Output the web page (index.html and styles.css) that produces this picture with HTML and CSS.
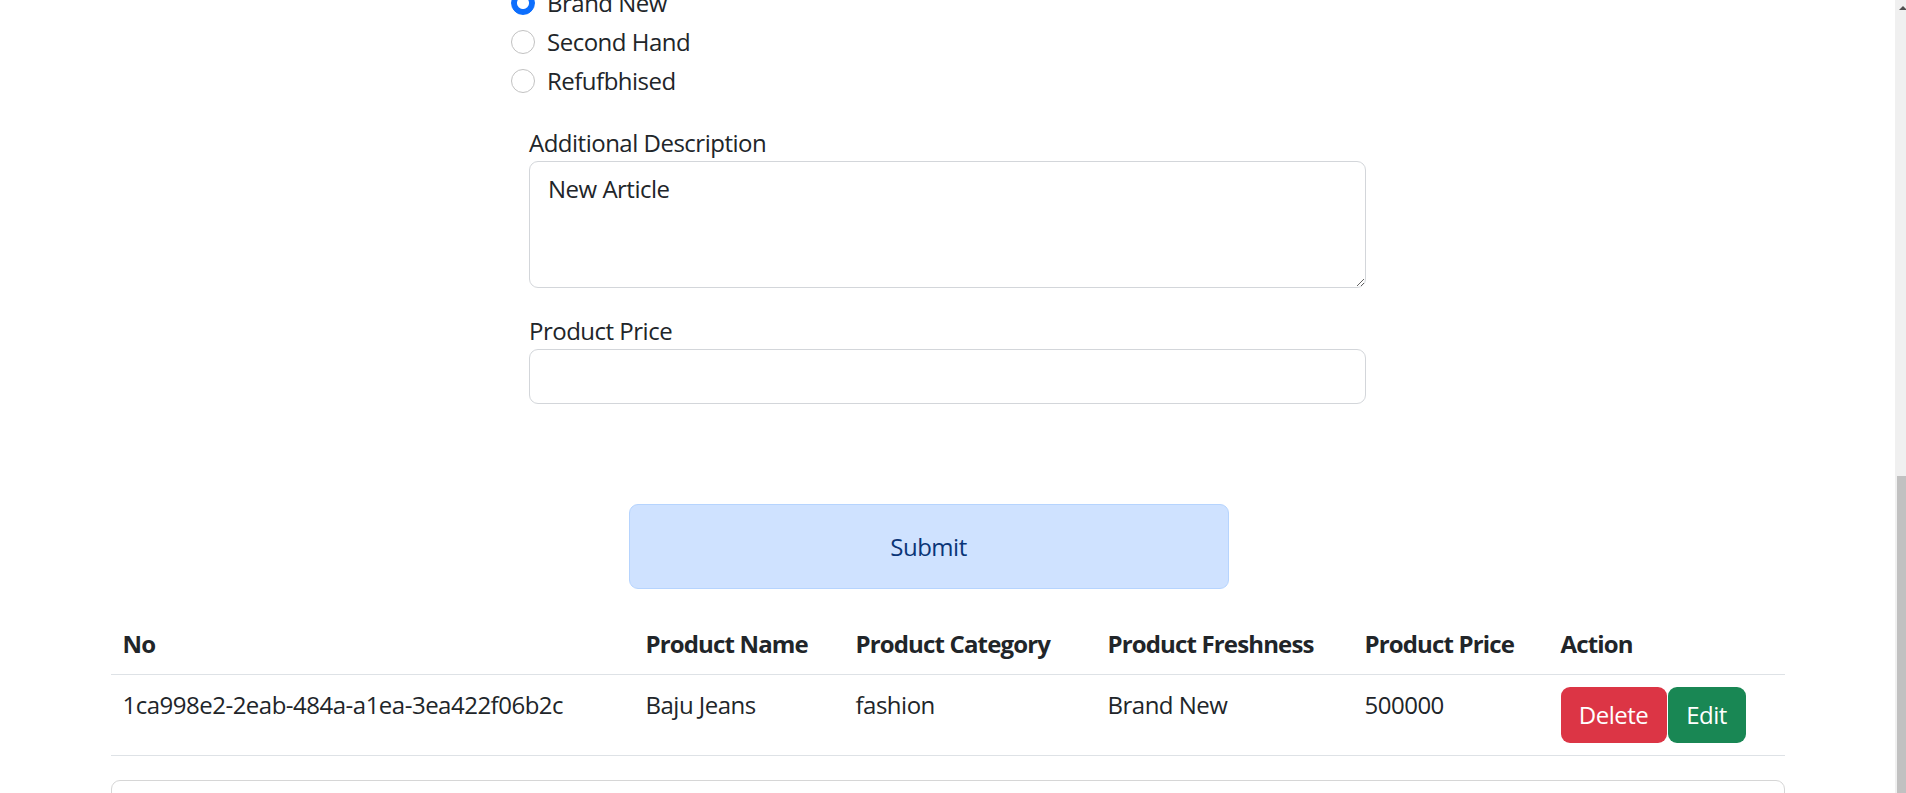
FILE: index.html
```html
<!DOCTYPE html>
<html lang="en">
<head>
<meta charset="utf-8">
<title>Products</title>
<link rel="stylesheet" href="styles.css">
</head>
<body>
<div class="shell">
  <main class="page">
    <div class="container">
      <form class="product-form">
        <div class="radio-group">
          <div class="form-check"><input type="radio" name="fresh" checked><label>Brand New</label></div>
          <div class="form-check"><input type="radio" name="fresh"><label>Second Hand</label></div>
          <div class="form-check"><input type="radio" name="fresh"><label>Refufbhised</label></div>
        </div>
        <div class="field">
          <label class="form-label">Additional Description</label>
          <textarea class="form-control textarea">New Article</textarea>
        </div>
        <div class="field last">
          <label class="form-label">Product Price</label>
          <input class="form-control input" type="text">
        </div>
      </form>
      <button class="btn-submit" type="button">Submit</button>
      <table class="table">
        <colgroup>
          <col class="c-no"><col class="c-name"><col class="c-cat"><col class="c-fresh"><col class="c-price"><col class="c-act">
        </colgroup>
        <thead>
          <tr><th>No</th><th>Product Name</th><th>Product Category</th><th>Product Freshness</th><th>Product Price</th><th>Action</th></tr>
        </thead>
        <tbody>
          <tr>
            <td>1ca998e2-2eab-484a-a1ea-3ea422f06b2c</td>
            <td>Baju Jeans</td>
            <td>fashion</td>
            <td>Brand New</td>
            <td>500000</td>
            <td><div class="actions"><button class="btn btn-delete" type="button">Delete</button><button class="btn btn-edit" type="button">Edit</button></div></td>
          </tr>
        </tbody>
      </table>
      <div class="card"></div>
    </div>
  </main>
  <div class="scrollbar"><div class="arrow"></div><div class="thumb"></div></div>
</div>
</body>
</html>
```
FILE: styles.css
```css
html, body {
  margin: 0;
  padding: 0;
  height: 100%;
}
body {
  font-family: "Open Sans", "Noto Sans", sans-serif;
  font-size: 24px;
  line-height: 36px;
  letter-spacing: -0.5px;
  color: #212529;
  background: #fff;
  overflow: hidden;
}
.shell {
  display: flex;
  height: 793px;
  overflow: hidden;
}
.page {
  flex: 1;
  min-width: 0;
}
.container {
  max-width: 1710px;
  box-sizing: border-box;
  padding: 0 18px;
  margin: 0 auto;
}
.product-form {
  width: 837px;
  margin: -15px auto 0;
  display: flex;
  flex-direction: column;
}
.radio-group {
  display: flex;
  flex-direction: column;
  margin-left: -18px;
  margin-bottom: 23px;
}
.form-check {
  display: flex;
  align-items: flex-start;
  min-height: 36px;
  margin-bottom: 3px;
}
.form-check input {
  appearance: none;
  -webkit-appearance: none;
  width: 24px;
  height: 24px;
  margin: 6px 12px 0 0;
  box-sizing: border-box;
  border: 1px solid #c2c2c2;
  border-radius: 50%;
  background: #fff;
  flex-shrink: 0;
}
.form-check input:checked {
  border-color: #0d6efd;
  background: radial-gradient(circle, #fff 0 5.5px, #0d6efd 6.5px);
}
.field {
  display: flex;
  flex-direction: column;
  margin-bottom: 25px;
}
.field.last {
  margin-bottom: 0;
}
.form-label {
  display: block;
  line-height: 36px;
}
.form-control {
  display: block;
  box-sizing: border-box;
  width: 100%;
  font: inherit;
  letter-spacing: inherit;
  color: #212529;
  border: 1px solid #d3d6da;
  border-radius: 9px;
  padding: 9px 18px;
  background: #fff;
  margin: 0;
}
.textarea {
  height: 127px;
  resize: vertical;
}
.input {
  height: 55px;
}
.btn-submit {
  display: block;
  margin: 100px 0 0 518px;
  width: 600px;
  height: 85px;
  background: #cfe2ff;
  border: 1px solid #b6d4fe;
  border-radius: 9px;
  color: #0a3577;
  font: inherit;
  letter-spacing: inherit;
  padding: 0;
}
.table {
  margin-top: 25px;
  width: 100%;
  border-collapse: separate;
  border-spacing: 0;
  table-layout: fixed;
}
.c-no { width: 523px; }
.c-name { width: 210px; }
.c-cat { width: 252px; }
.c-fresh { width: 257px; }
.c-price { width: 196px; }
.c-act { width: 236px; }
.table th,
.table td {
  padding: 12px;
  text-align: left;
  vertical-align: top;
  border-bottom: 1px solid #dee2e6;
}
.table th {
  font-weight: 700;
  letter-spacing: -0.85px;
}
.actions {
  display: flex;
  gap: 1px;
}
.btn {
  height: 56px;
  border: none;
  border-radius: 9px;
  color: #fff;
  font: inherit;
  letter-spacing: inherit;
  padding: 0;
  text-align: center;
}
.btn-delete {
  width: 106px;
  background: #dc3545;
}
.btn-edit {
  width: 78px;
  background: #198754;
}
.card {
  margin-top: 24px;
  height: 120px;
  border: 1px solid #d6d6d6;
  border-radius: 9px;
}
.scrollbar {
  width: 11px;
  background: #f0f0f0;
  display: flex;
  flex-direction: column;
}
.arrow {
  width: 0;
  height: 0;
  margin: 6px 0 0 4px;
  border-left: 4px solid transparent;
  border-right: 4px solid transparent;
  border-bottom: 4px solid #505050;
}
.thumb {
  margin-top: auto;
  margin-left: 2px;
  height: 317px;
  background: #c1c1c1;
}
```
